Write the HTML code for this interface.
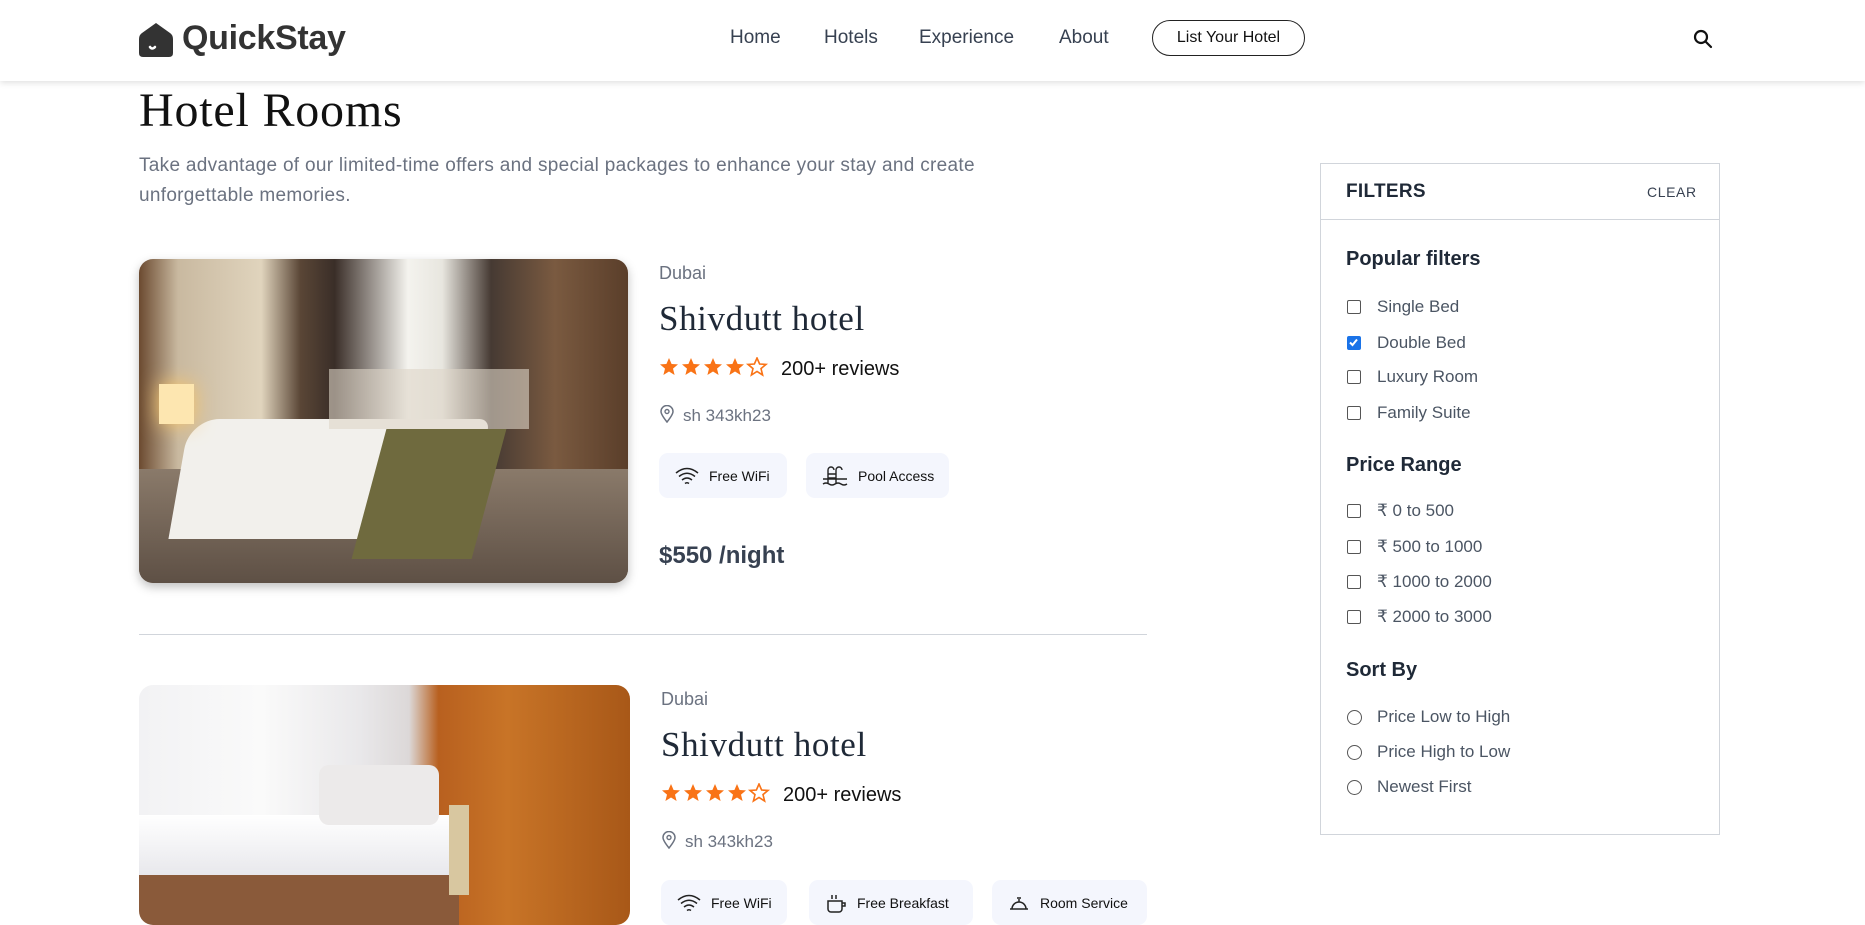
<!DOCTYPE html>
<html><head><meta charset="utf-8"><style>
*{margin:0;padding:0;box-sizing:border-box}
body{width:1865px;height:909px;overflow:hidden;background:#fff;font-family:"Liberation Sans",sans-serif;color:#1f2937;position:relative}
.abs{position:absolute}
nav{position:absolute;left:0;top:0;width:1865px;height:81px;background:#fff;box-shadow:0 2px 6px rgba(0,0,0,.12);z-index:5}
.nl{position:absolute;top:27px;font-size:19px;color:#374151}
.serif{font-family:"Liberation Serif",serif}
.chip{position:absolute;height:45px;background:#f4f6fd;border-radius:9px;font-size:14px;color:#111;display:flex;align-items:center;padding-left:16px;gap:10px}
.chk{position:absolute;left:1347px;width:14px;height:14px;border:1.5px solid #555;border-radius:2px}
.rad{position:absolute;left:1347px;width:15px;height:15px;border:1.5px solid #555;border-radius:50%}
.lab{position:absolute;left:1377px;font-size:17px;color:#4b5563}
.fh{position:absolute;left:1346px;font-size:20px;font-weight:bold;color:#1f2937}
</style></head><body>
<nav>
<svg class="abs" style="left:139px;top:21px" width="34" height="36" viewBox="0 0 34 36"><path d="M3 12 L17 2 L31 12 Q34 14 34 18 L34 32 Q34 36 30 36 L4 36 Q0 36 0 32 L0 18 Q0 14 3 12Z" fill="#333"/><path d="M11 26 Q13 29 16 26" stroke="#fff" stroke-width="2.5" fill="none" stroke-linecap="round"/></svg>
<div class="abs" style="left:182px;top:19px;font-size:34px;font-weight:bold;color:#333;letter-spacing:-0.3px">QuickStay</div>
<div class="nl" style="left:730px">Home</div>
<div class="nl" style="left:824px">Hotels</div>
<div class="nl" style="left:919px">Experience</div>
<div class="nl" style="left:1059px">About</div>
<div class="abs" style="left:1152px;top:20px;width:153px;height:36px;border:1.5px solid #222;border-radius:18px;font-size:16px;text-align:center;line-height:33px;color:#111">List Your Hotel</div>
<svg class="abs" style="left:1693px;top:29px" width="20" height="20" viewBox="0 0 20 20"><circle cx="8" cy="8" r="6" stroke="#111" stroke-width="2.2" fill="none"/><path d="M12.5 12.5 L18 18" stroke="#111" stroke-width="2.2" stroke-linecap="round"/></svg>
</nav>
<div class="abs serif" style="left:139px;top:83px;font-size:48px;color:#111;letter-spacing:0.8px">Hotel Rooms</div>
<div class="abs" style="left:139px;top:151px;width:900px;font-size:19px;line-height:30px;color:#6b7280;letter-spacing:0.3px">Take advantage of our limited-time offers and special packages to enhance your stay and create<br>unforgettable memories.</div>

<svg width="0" height="0" style="position:absolute"><defs><path id="st" d="M10 1 L12.6 7 L19 7.4 L14 11.6 L15.6 18 L10 14.5 L4.4 18 L6 11.6 L1 7.4 L7.4 7Z"/></defs></svg>

<!-- card 1 image -->
<div class="abs" style="left:139px;top:259px;width:489px;height:324px;border-radius:14px;overflow:hidden;box-shadow:0 4px 10px rgba(0,0,0,.25);background:linear-gradient(90deg,#6b4a30 0%,#c9b9a0 8%,#e0d4bd 25%,#5a4636 33%,#3a2e28 40%,#f4f3ee 55%,#e8e6df 62%,#463a33 72%,#7a5a40 85%,#5a3e2a 100%)">
<div class="abs" style="left:0;top:210px;width:489px;height:114px;background:linear-gradient(180deg,#8a7a6a,#5e5045)"></div>
<div class="abs" style="left:40px;top:160px;width:300px;height:120px;background:#f2f0ec;border-radius:30px 10px 0 0;transform:skewX(-10deg)"></div>
<div class="abs" style="left:230px;top:170px;width:120px;height:130px;background:#6f6a3e;transform:skewX(-15deg)"></div>
<div class="abs" style="left:190px;top:110px;width:200px;height:60px;background:#ddd6c8;opacity:.6"></div>
<div class="abs" style="left:20px;top:125px;width:35px;height:40px;background:#fde6b0;box-shadow:0 0 20px #f8c66a"></div>
</div>
<div class="abs" style="left:659px;top:263px;font-size:18px;color:#6b7280">Dubai</div>
<div class="abs serif" style="left:659px;top:299px;font-size:35px;color:#1f2937;letter-spacing:0.6px">Shivdutt hotel</div>
<svg class="abs" style="left:659px;top:357px" width="112" height="22" viewBox="0 0 112 22"><use href="#st" fill="#f97316"/><use href="#st" x="22" fill="#f97316"/><use href="#st" x="44" fill="#f97316"/><use href="#st" x="66" fill="#f97316"/><use href="#st" x="88" fill="none" stroke="#f97316" stroke-width="1.6"/></svg>
<div class="abs" style="left:781px;top:358px;font-size:20px;color:#111">200+ reviews</div>
<svg class="abs" style="left:660px;top:405px" width="14" height="18" viewBox="0 0 14 18"><path d="M7 17 C3 12 1 9 1 6.5 A6 6 0 0 1 13 6.5 C13 9 11 12 7 17Z" stroke="#6b7280" stroke-width="1.5" fill="none"/><circle cx="7" cy="6.5" r="2" stroke="#6b7280" stroke-width="1.4" fill="none"/></svg>
<div class="abs" style="left:683px;top:406px;font-size:17px;color:#6b7280">sh 343kh23</div>
<div class="chip" style="left:659px;top:453px;width:128px"><svg width="24" height="18" viewBox="0 0 24 18"><path d="M1 6 Q12 -3 23 6 M4 9.5 Q12 3 20 9.5 M7 13 Q12 9 17 13 M10 16.5 Q12 15 14 16.5" stroke="#222" stroke-width="1.5" fill="none"/></svg>Free WiFi</div>
<div class="chip" style="left:806px;top:453px;width:143px"><svg width="26" height="20" viewBox="0 0 26 20"><path d="M6 18 V4 A3 3 0 0 1 12 4 M14 18 V4 A3 3 0 0 1 20 4 M6 8 H14 M6 12 H14 M1 13 H25 M1 18 Q4 16 7 18 T13 18 T19 18 T25 18" stroke="#222" stroke-width="1.4" fill="none"/></svg>Pool Access</div>
<div class="abs" style="left:659px;top:542px;font-size:24px;font-weight:bold;color:#374151">$550 /night</div>
<div class="abs" style="left:139px;top:634px;width:1008px;height:1px;background:#d1d5db"></div>

<!-- card 2 -->
<div class="abs" style="left:139px;top:685px;width:491px;height:240px;border-radius:14px;overflow:hidden;background:linear-gradient(90deg,#f2f2f4 0%,#fafafa 25%,#e9e8ea 45%,#dcd8d8 55%,#b8601f 61%,#c87427 75%,#a85818 100%)">
<div class="abs" style="left:0;top:130px;width:320px;height:120px;background:#f4f4f6"></div>
<div class="abs" style="left:0;top:180px;width:320px;height:60px;background:#8a5a3a"></div>
<div class="abs" style="left:0;top:130px;width:320px;height:60px;background:linear-gradient(180deg,#fff,#e8e8ec)"></div>
<div class="abs" style="left:180px;top:80px;width:120px;height:60px;background:#eceaea;border-radius:10px"></div>
<div class="abs" style="left:310px;top:120px;width:20px;height:90px;background:#d8c7a0"></div>
</div>
<div class="abs" style="left:661px;top:689px;font-size:18px;color:#6b7280">Dubai</div>
<div class="abs serif" style="left:661px;top:725px;font-size:35px;color:#1f2937;letter-spacing:0.6px">Shivdutt hotel</div>
<svg class="abs" style="left:661px;top:783px" width="112" height="22" viewBox="0 0 112 22"><use href="#st" fill="#f97316"/><use href="#st" x="22" fill="#f97316"/><use href="#st" x="44" fill="#f97316"/><use href="#st" x="66" fill="#f97316"/><use href="#st" x="88" fill="none" stroke="#f97316" stroke-width="1.6"/></svg>
<div class="abs" style="left:783px;top:784px;font-size:20px;color:#111">200+ reviews</div>
<svg class="abs" style="left:662px;top:831px" width="14" height="18" viewBox="0 0 14 18"><path d="M7 17 C3 12 1 9 1 6.5 A6 6 0 0 1 13 6.5 C13 9 11 12 7 17Z" stroke="#6b7280" stroke-width="1.5" fill="none"/><circle cx="7" cy="6.5" r="2" stroke="#6b7280" stroke-width="1.4" fill="none"/></svg>
<div class="abs" style="left:685px;top:832px;font-size:17px;color:#6b7280">sh 343kh23</div>
<div class="chip" style="left:661px;top:880px;width:126px"><svg width="24" height="18" viewBox="0 0 24 18"><path d="M1 6 Q12 -3 23 6 M4 9.5 Q12 3 20 9.5 M7 13 Q12 9 17 13 M10 16.5 Q12 15 14 16.5" stroke="#222" stroke-width="1.5" fill="none"/></svg>Free WiFi</div>
<div class="chip" style="left:809px;top:880px;width:164px"><svg width="22" height="20" viewBox="0 0 22 20"><path d="M3 8 H17 V16 A3 3 0 0 1 14 19 H6 A3 3 0 0 1 3 16Z M17 10 H20 V13 H17 M7 6 V2 M11 6 V2" stroke="#222" stroke-width="1.5" fill="none"/></svg>Free Breakfast</div>
<div class="chip" style="left:992px;top:880px;width:155px"><svg width="22" height="20" viewBox="0 0 22 20"><path d="M2 16 H20 M4 16 A7 7 0 0 1 18 16 M11 9 V6 M9 5 H13" stroke="#222" stroke-width="1.5" fill="none"/></svg>Room Service</div>

<!-- filters -->
<div class="abs" style="left:1320px;top:163px;width:400px;height:672px;border:1px solid #d1d5db"></div>
<div class="abs" style="left:1320px;top:219px;width:400px;height:1px;background:#d1d5db"></div>
<div class="abs" style="left:1346px;top:181px;font-size:19px;color:#1f2937;font-weight:bold;letter-spacing:0.3px">FILTERS</div>
<div class="abs" style="left:1647px;top:184px;font-size:14px;color:#374151;letter-spacing:.6px">CLEAR</div>
<div class="fh" style="top:248px">Popular filters</div>
<div class="chk" style="top:300px"></div><div class="lab" style="top:297px">Single Bed</div>
<div class="chk" style="top:336px;background:#1a73e8;border-color:#1a73e8"><svg width="11" height="11" viewBox="0 0 11 11" style="position:absolute;left:0;top:0"><path d="M2 5.5 L4.5 8 L9 2.5" stroke="#fff" stroke-width="2" fill="none"/></svg></div><div class="lab" style="top:333px">Double Bed</div>
<div class="chk" style="top:370px"></div><div class="lab" style="top:367px">Luxury Room</div>
<div class="chk" style="top:406px"></div><div class="lab" style="top:403px">Family Suite</div>
<div class="fh" style="top:454px">Price Range</div>
<div class="chk" style="top:504px"></div><div class="lab" style="top:501px">₹ 0 to 500</div>
<div class="chk" style="top:540px"></div><div class="lab" style="top:537px">₹ 500 to 1000</div>
<div class="chk" style="top:575px"></div><div class="lab" style="top:572px">₹ 1000 to 2000</div>
<div class="chk" style="top:610px"></div><div class="lab" style="top:607px">₹ 2000 to 3000</div>
<div class="fh" style="top:659px">Sort By</div>
<div class="rad" style="top:710px"></div><div class="lab" style="top:707px">Price Low to High</div>
<div class="rad" style="top:745px"></div><div class="lab" style="top:742px">Price High to Low</div>
<div class="rad" style="top:780px"></div><div class="lab" style="top:777px">Newest First</div>
</body></html>
